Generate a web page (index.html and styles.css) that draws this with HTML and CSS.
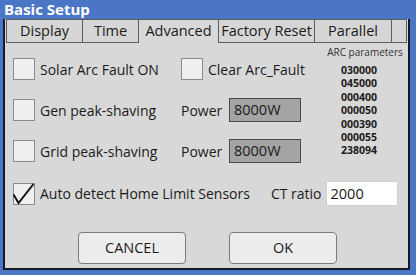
FILE: index.html
```html
<!DOCTYPE html>
<html lang="en">
<head>
    <meta charset="UTF-8">
    <title>Basic Setup</title>
    <link rel="stylesheet" href="styles.css">
</head>
<body>
    <div class="ablak">
        <div class="cim">Basic Setup</div>
        <div class="keret">
            <div class="fulek">
                <div class="ful f1">Display</div>
                <div class="ful f2">Time</div>
                <div class="ful f3 aktiv">Advanced</div>
                <div class="ful f4">Factory Reset</div>
                <div class="ful f5">Parallel</div>
                <div class="ful f6"></div>
            </div>
            <div class="tartalom">
                <div class="fo">
                    <div class="mezok">
                        <div class="sor">
                            <div class="oszlop1"><span class="doboz"></span><span>Solar Arc Fault ON</span></div>
                            <div class="oszlop2"><span class="doboz"></span><span>Clear Arc_Fault</span></div>
                        </div>
                        <div class="sor">
                            <div class="oszlop1"><span class="doboz"></span><span>Gen peak-shaving</span></div>
                            <div class="oszlop2"><span class="felirat">Power</span><span class="szurke">8000W</span></div>
                        </div>
                        <div class="sor">
                            <div class="oszlop1"><span class="doboz"></span><span>Grid peak-shaving</span></div>
                            <div class="oszlop2"><span class="felirat">Power</span><span class="szurke">8000W</span></div>
                        </div>
                    </div>
                    <div class="arc">
                        <div class="arccim">ARC parameters</div>
                        <div class="ertek">030000</div>
                        <div class="ertek">045000</div>
                        <div class="ertek">000400</div>
                        <div class="ertek">000050</div>
                        <div class="ertek">000390</div>
                        <div class="ertek">000055</div>
                        <div class="ertek">238094</div>
                    </div>
                </div>
                <div class="sor negyedik">
                    <span class="doboz">
                        <svg width="22" height="22" viewBox="0 0 22 22"><path d="M0.5 11.5 L5.5 20 L20.5 1" fill="none" stroke="#111" stroke-width="2"/></svg>
                    </span>
                    <span>Auto detect Home Limit Sensors</span>
                    <span class="ct">CT ratio</span>
                    <span class="feher">2000</span>
                </div>
                <div class="gombok">
                    <div class="gomb">CANCEL</div>
                    <div class="gomb">OK</div>
                </div>
            </div>
        </div>
    </div>
</body>
</html>
```
FILE: styles.css
```css
body{
    margin:0;
    background:#4b76c6;
    font-family: "Open Sans", "Noto Sans", sans-serif;
    color:#1b1b1b;
}
.ablak{
    width:416px;
    height:275px;
}
.cim{
    height:19px;
    line-height:19px;
    padding-left:4px;
    color:white;
    font-weight:bold;
    font-size:15px;
}
.keret{
    margin:0 6px 0 3px;
    height:249px;
    border:2px solid #141c2c;
    border-top:none;
    background:#d8d8d8;
}
.fulek{
    display:flex;
    height:24px;
    padding-left:1px;
}
.ful{
    box-sizing:border-box;
    height:24px;
    border:1px solid #5e5e5e;
    border-left:none;
    text-align:center;
    font-size:14.5px;
    line-height:22px;
    background:#d6d6d6;
}
.f1{width:77px;border-left:1px solid #5e5e5e;}
.f2{width:56px;}
.f3{width:80px;}
.f4{width:96px;}
.f5{width:77px;}
.f6{width:15px;}
.aktiv{
    border-bottom:none;
    background:#d8d8d8;
}
.tartalom{
    padding-left:8px;
}
.fo{
    display:flex;
}
.mezok{
    display:flex;
    flex-direction:column;
    gap:17px;
    padding-top:14px;
    width:313px;
}
.sor{
    display:flex;
    align-items:center;
    height:24px;
    font-size:14px;
}
.oszlop1{
    display:flex;
    align-items:center;
    width:168px;
}
.oszlop2{
    display:flex;
    align-items:center;
}
.doboz{
    box-sizing:border-box;
    width:22px;
    height:22px;
    border:1px solid #8a8a8a;
    background:#efefef;
    margin-right:5px;
    flex-shrink:0;
}
.doboz svg{
    display:block;
    margin:-1px;
}
.felirat{
    width:48px;
}
.szurke{
    box-sizing:border-box;
    width:72px;
    height:24px;
    border:1px solid #4a4a4a;
    background:#a4a4a4;
    padding-left:4px;
    line-height:22px;
    font-size:14.5px;
}
.arc{
    padding-top:2px;
    width:78px;
}
.arccim{
    font-size:10px;
    height:19px;
    line-height:15px;
    color:#333;
    text-align:center;
}
.ertek{
    padding-left:15px;
    font-size:10.5px;
    font-weight:bold;
    height:13.4px;
    line-height:13.4px;
}
.negyedik{
    margin-top:18px;
    height:25px;
}
.ct{
    margin-left:21px;
    margin-right:4px;
}
.feher{
    box-sizing:border-box;
    width:72px;
    height:25px;
    background:white;
    border:1px solid #cfcfcf;
    padding-left:4px;
    line-height:23px;
    font-size:14.5px;
}
.gombok{
    display:flex;
    gap:43px;
    padding-left:65px;
    margin-top:26px;
}
.gomb{
    box-sizing:border-box;
    width:108px;
    height:32px;
    border:1px solid #7c7c7c;
    border-radius:4px;
    background:#ededed;
    text-align:center;
    line-height:30px;
    font-size:14.5px;
}
```
